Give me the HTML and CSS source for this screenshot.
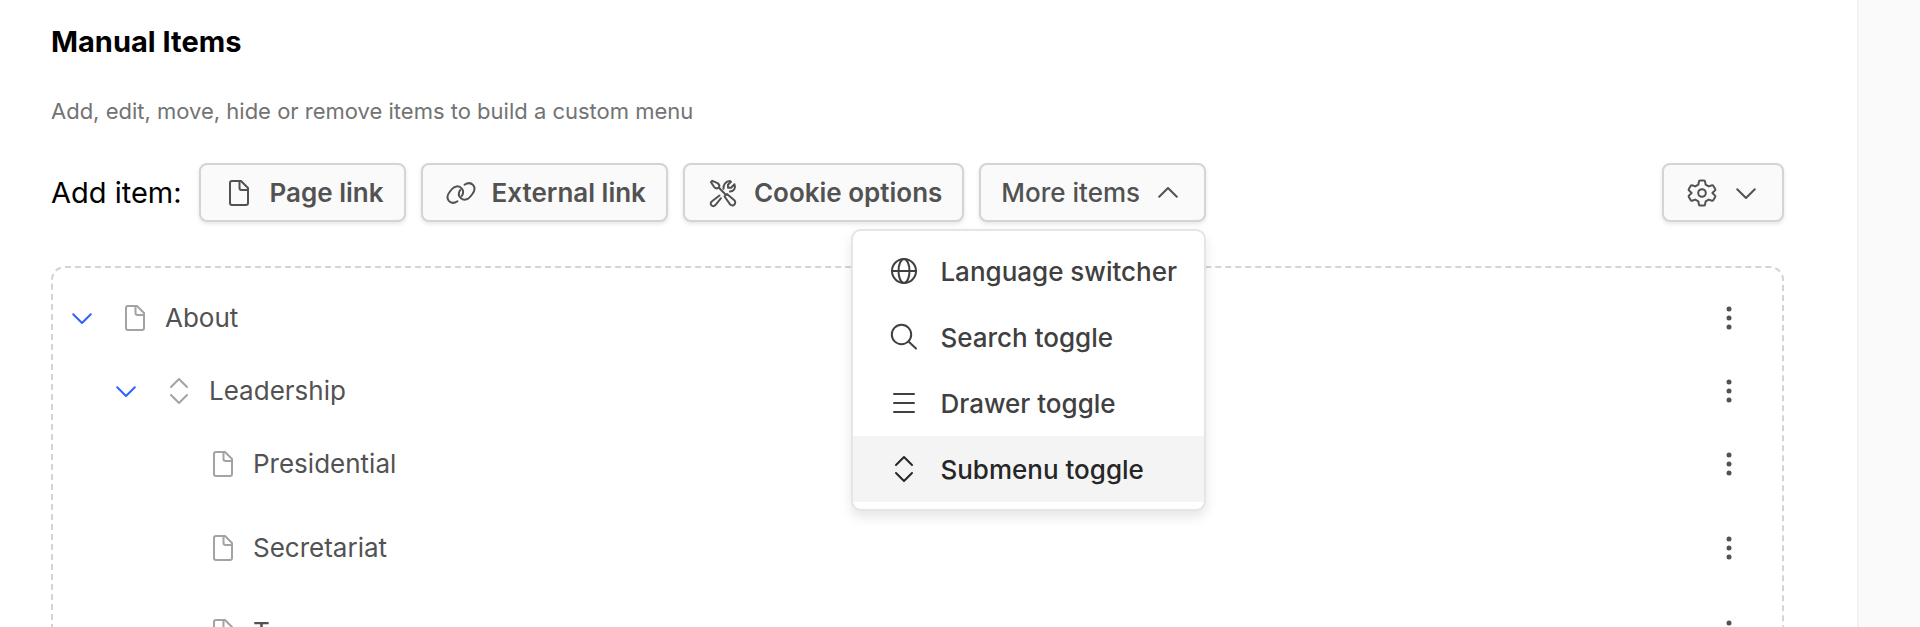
FILE: index.html
```
<!DOCTYPE html>
<html lang="en">
<head>
    <meta charset="UTF-8">
    <meta name="viewport" content="width=device-width, initial-scale=1.0">
    <title>Manual Items</title>
    <link rel="stylesheet" href="styles.css">
</head>
<body>
    <!-- Shared icons -->
    <svg class="sprite" aria-hidden="true">
        <symbol id="icon-page" viewBox="0 0 28 28">
            <path d="M7 2h9l7 7V24a2 2 0 0 1-2 2H7a2 2 0 0 1-2-2V4a2 2 0 0 1 2-2z"/>
            <path d="M14.500 2v7a2 2 0 0 0 2 2h6.500"/>
        </symbol>
        <symbol id="icon-link" viewBox="1 -2 28 28">
            <path d="M11.500 20.200C8.500 22.300 5 22.300 2.800 19.800C.6 17 1.300 14 3.600 11L6 8C8.500 5 12.500 4.500 15 6.800C17.500 9 17.800 12 15.800 15"/>
            <path d="M18.500 3.800C21.500 1.700 25 1.700 27.200 4.200C29.400 7 28.700 10 26.400 13L24 16C21.500 19 17.500 19.500 15 17.200C12.500 15 12.200 12 14.200 9"/>
        </symbol>
        <symbol id="icon-tools" viewBox="0 0 28 28">
            <path d="M2 3.200L3.300 1.800L8.600 4.100C10 5.100 10.700 7 10 8.700C8.300 9.700 6.300 9.300 5 7.800z"/>
            <path d="M10 8.700L16 15"/>
            <path d="M15.500 17.500L18 15L25.300 21.300A2.900 2.900 0 0 1 21.300 25.600z"/>
            <path d="M10.500 16.500L3 22.300A2.600 2.600 0 1 0 6.600 25.800L12 19.200"/>
            <path d="M14.500 9.800C14 6 16.500 2.200 21 2L22 2.700L19 5.800V8.800H22L25.500 5.300C27 9 25 12.300 21 12.600"/>
        </symbol>
        <symbol id="icon-up" viewBox="0 0 24 24">
            <path d="M3.200 15.800L12 7l8.800 8.800"/>
        </symbol>
        <symbol id="icon-down" viewBox="0 0 24 24">
            <path d="M3.200 8.200L12 17l8.800-8.800"/>
        </symbol>
        <symbol id="icon-gear" viewBox="0 0 28 28">
            <path d="M12 1.500h4a1 1 0 0 1 1 .8l.7 3.400l3 1.700l3.300-1.100a1 1 0 0 1 1.200 .4l2 3.400a1 1 0 0 1-.2 1.300l-2.600 2.600l2.600 2.600a1 1 0 0 1 .2 1.300l-2 3.400a1 1 0 0 1-1.200 .4l-3.300-1.100l-3 1.700l-.7 3.400a1 1 0 0 1-1 .8h-4a1 1 0 0 1-1-.8l-.7-3.400l-3-1.700l-3.300 1.100a1 1 0 0 1-1.200-.4l-2-3.400a1 1 0 0 1 .2-1.300l2.600-2.600l-2.600-2.600a1 1 0 0 1-.2-1.300l2-3.400a1 1 0 0 1 1.200-.4l3.300 1.100l3-1.700l.7-3.400a1 1 0 0 1 1-.8z"/>
            <circle cx="14" cy="14" r="3.800"/>
        </symbol>
        <symbol id="icon-globe" viewBox="0 0 28 28">
            <circle cx="14" cy="14" r="12"/>
            <ellipse cx="14" cy="14" rx="5.500" ry="12"/>
            <path d="M2 14h24"/>
        </symbol>
        <symbol id="icon-search" viewBox="0 0 28 28">
            <circle cx="11.500" cy="11.500" r="9.700"/>
            <path d="M18.500 18.500l7.500 7"/>
        </symbol>
        <symbol id="icon-drawer" viewBox="0 0 28 28">
            <path d="M4 5h20M4 14h20M4 23h20"/>
        </symbol>
        <symbol id="icon-submenu" viewBox="0 0 28 28">
            <path d="M6 10l8-8l8 8M6 18l8 8l8-8"/>
        </symbol>
        <symbol id="icon-dots" viewBox="0 0 28 28">
            <circle cx="14" cy="5" r="2.500"/>
            <circle cx="14" cy="14" r="2.500"/>
            <circle cx="14" cy="23" r="2.500"/>
        </symbol>
    </svg>

    <main class="panel">
        <h2 class="title">Manual Items</h2>
        <p class="description">Add, edit, move, hide or remove items to build a custom menu</p>

        <div class="toolbar">
            <span class="toolbar-label">Add item:</span>
            <button type="button" class="btn"><svg class="icon"><use href="#icon-page"/></svg>Page link</button>
            <button type="button" class="btn"><svg class="icon"><use href="#icon-link"/></svg>External link</button>
            <button type="button" class="btn"><svg class="icon"><use href="#icon-tools"/></svg>Cookie options</button>
            <div class="dropdown">
                <button type="button" class="btn btn-more" aria-expanded="true">More items<svg class="icon chevron"><use href="#icon-up"/></svg></button>
                <div class="menu" role="menu">
                    <button type="button" class="menu-item" role="menuitem"><svg class="icon"><use href="#icon-globe"/></svg>Language switcher</button>
                    <button type="button" class="menu-item" role="menuitem"><svg class="icon"><use href="#icon-search"/></svg>Search toggle</button>
                    <button type="button" class="menu-item" role="menuitem"><svg class="icon"><use href="#icon-drawer"/></svg>Drawer toggle</button>
                    <button type="button" class="menu-item active" role="menuitem"><svg class="icon"><use href="#icon-submenu"/></svg>Submenu toggle</button>
                </div>
            </div>
            <button type="button" class="btn btn-settings" aria-label="Settings"><svg class="icon"><use href="#icon-gear"/></svg><svg class="icon chevron"><use href="#icon-down"/></svg></button>
        </div>

        <div class="tree">
            <ul class="tree-list">
                <li>
                    <div class="row">
                        <button type="button" class="toggle" aria-label="Collapse About"><svg class="icon chevron"><use href="#icon-down"/></svg></button>
                        <svg class="icon type"><use href="#icon-page"/></svg>
                        <span class="name">About</span>
                        <button type="button" class="actions" aria-label="About actions"><svg class="icon dots"><use href="#icon-dots"/></svg></button>
                    </div>
                    <ul class="tree-list nested">
                        <li>
                            <div class="row">
                                <button type="button" class="toggle" aria-label="Collapse Leadership"><svg class="icon chevron"><use href="#icon-down"/></svg></button>
                                <svg class="icon type"><use href="#icon-submenu"/></svg>
                                <span class="name">Leadership</span>
                                <button type="button" class="actions" aria-label="Leadership actions"><svg class="icon dots"><use href="#icon-dots"/></svg></button>
                            </div>
                            <ul class="tree-list leaves">
                                <li class="row">
                                    <svg class="icon type"><use href="#icon-page"/></svg>
                                    <span class="name">Presidential</span>
                                    <button type="button" class="actions" aria-label="Presidential actions"><svg class="icon dots"><use href="#icon-dots"/></svg></button>
                                </li>
                                <li class="row">
                                    <svg class="icon type"><use href="#icon-page"/></svg>
                                    <span class="name">Secretariat</span>
                                    <button type="button" class="actions" aria-label="Secretariat actions"><svg class="icon dots"><use href="#icon-dots"/></svg></button>
                                </li>
                                <li class="row">
                                    <svg class="icon type"><use href="#icon-page"/></svg>
                                    <span class="name">T</span>
                                    <button type="button" class="actions" aria-label="T actions"><svg class="icon dots"><use href="#icon-dots"/></svg></button>
                                </li>
                            </ul>
                        </li>
                    </ul>
                </li>
            </ul>
        </div>
    </main>
</body>
</html>
```
FILE: styles.css
```
* {
    margin: 0;
    padding: 0;
    box-sizing: border-box;
}

body {
    height: 100vh;
    overflow: hidden;
    padding-right: 61px;
    background: #fafafa;
    font-family: Inter, "Liberation Sans", sans-serif;
    font-size: 26px;
    color: #525252;
}

button {
    border: none;
    background: none;
    font: inherit;
    color: inherit;
    cursor: pointer;
}

.sprite {
    display: none;
}

symbol {
    overflow: visible;
}

.icon {
    width: 28px;
    height: 28px;
    flex: none;
    overflow: visible;
    fill: none;
    stroke: currentColor;
    stroke-width: 2;
    stroke-linecap: round;
    stroke-linejoin: round;
}

.icon.chevron {
    width: 24px;
    height: 24px;
}

.icon.dots {
    fill: currentColor;
    stroke: none;
}

.panel {
    min-height: 100vh;
    padding: 22px 73px 0 51px;
    background: #fff;
    border-right: 2px solid #f2f2f2;
}

.title {
    font-size: 29px;
    line-height: 40px;
    font-weight: 700;
    color: #000;
}

.description {
    margin-top: 33px;
    font-size: 22px;
    line-height: 32px;
    color: #737373;
}

/* Toolbar */
.toolbar {
    display: flex;
    align-items: center;
    gap: 15px;
    margin-top: 36px;
}

.toolbar-label {
    font-size: 29px;
    margin-right: 2px;
    color: #000;
}

.btn {
    display: flex;
    align-items: center;
    gap: 17px;
    height: 59px;
    padding: 0 20px 0 24px;
    background: #fafafa;
    border: 2px solid #d4d4d4;
    border-radius: 8px;
    box-shadow: 0 2px 4px rgba(0, 0, 0, 0.1);
    font-weight: 600;
    white-space: nowrap;
}

.btn-more {
    gap: 16px;
    padding: 0 24px 0 20px;
    font-weight: 500;
}

.btn-settings {
    gap: 18px;
    margin-left: auto;
    padding: 0 24px;
}

.dropdown {
    position: relative;
}

.menu {
    position: absolute;
    top: 66px;
    right: 0;
    z-index: 1;
    padding: 7px 0;
    background: #fff;
    border: 2px solid #e5e5e5;
    border-radius: 10px;
    box-shadow: 0 6px 12px rgba(0, 0, 0, 0.1);
}

.menu-item {
    display: flex;
    align-items: center;
    gap: 22px;
    width: 100%;
    height: 66px;
    padding: 0 27px 0 37px;
    font-weight: 500;
    color: #404040;
    white-space: nowrap;
}

.menu-item.active {
    background: #f4f4f4;
    color: #262626;
}

/* Menu tree */
.tree {
    margin-top: 44px;
    padding: 13px 39px 13px 17px;
    border: 2px dashed #d4d4d4;
    border-radius: 14px;
}

.tree-list {
    list-style: none;
}

.nested {
    padding-left: 44px;
}

.leaves {
    padding-left: 95px;
}

.row {
    display: flex;
    align-items: center;
    height: 73px;
}

.leaves .row {
    margin-bottom: 11px;
}

.toggle {
    display: flex;
    margin-right: 27px;
    color: #2f62ff;
}

.type {
    margin-right: 16px;
    color: #a3a3a3;
}

.actions {
    display: flex;
    margin-left: auto;
}
```
